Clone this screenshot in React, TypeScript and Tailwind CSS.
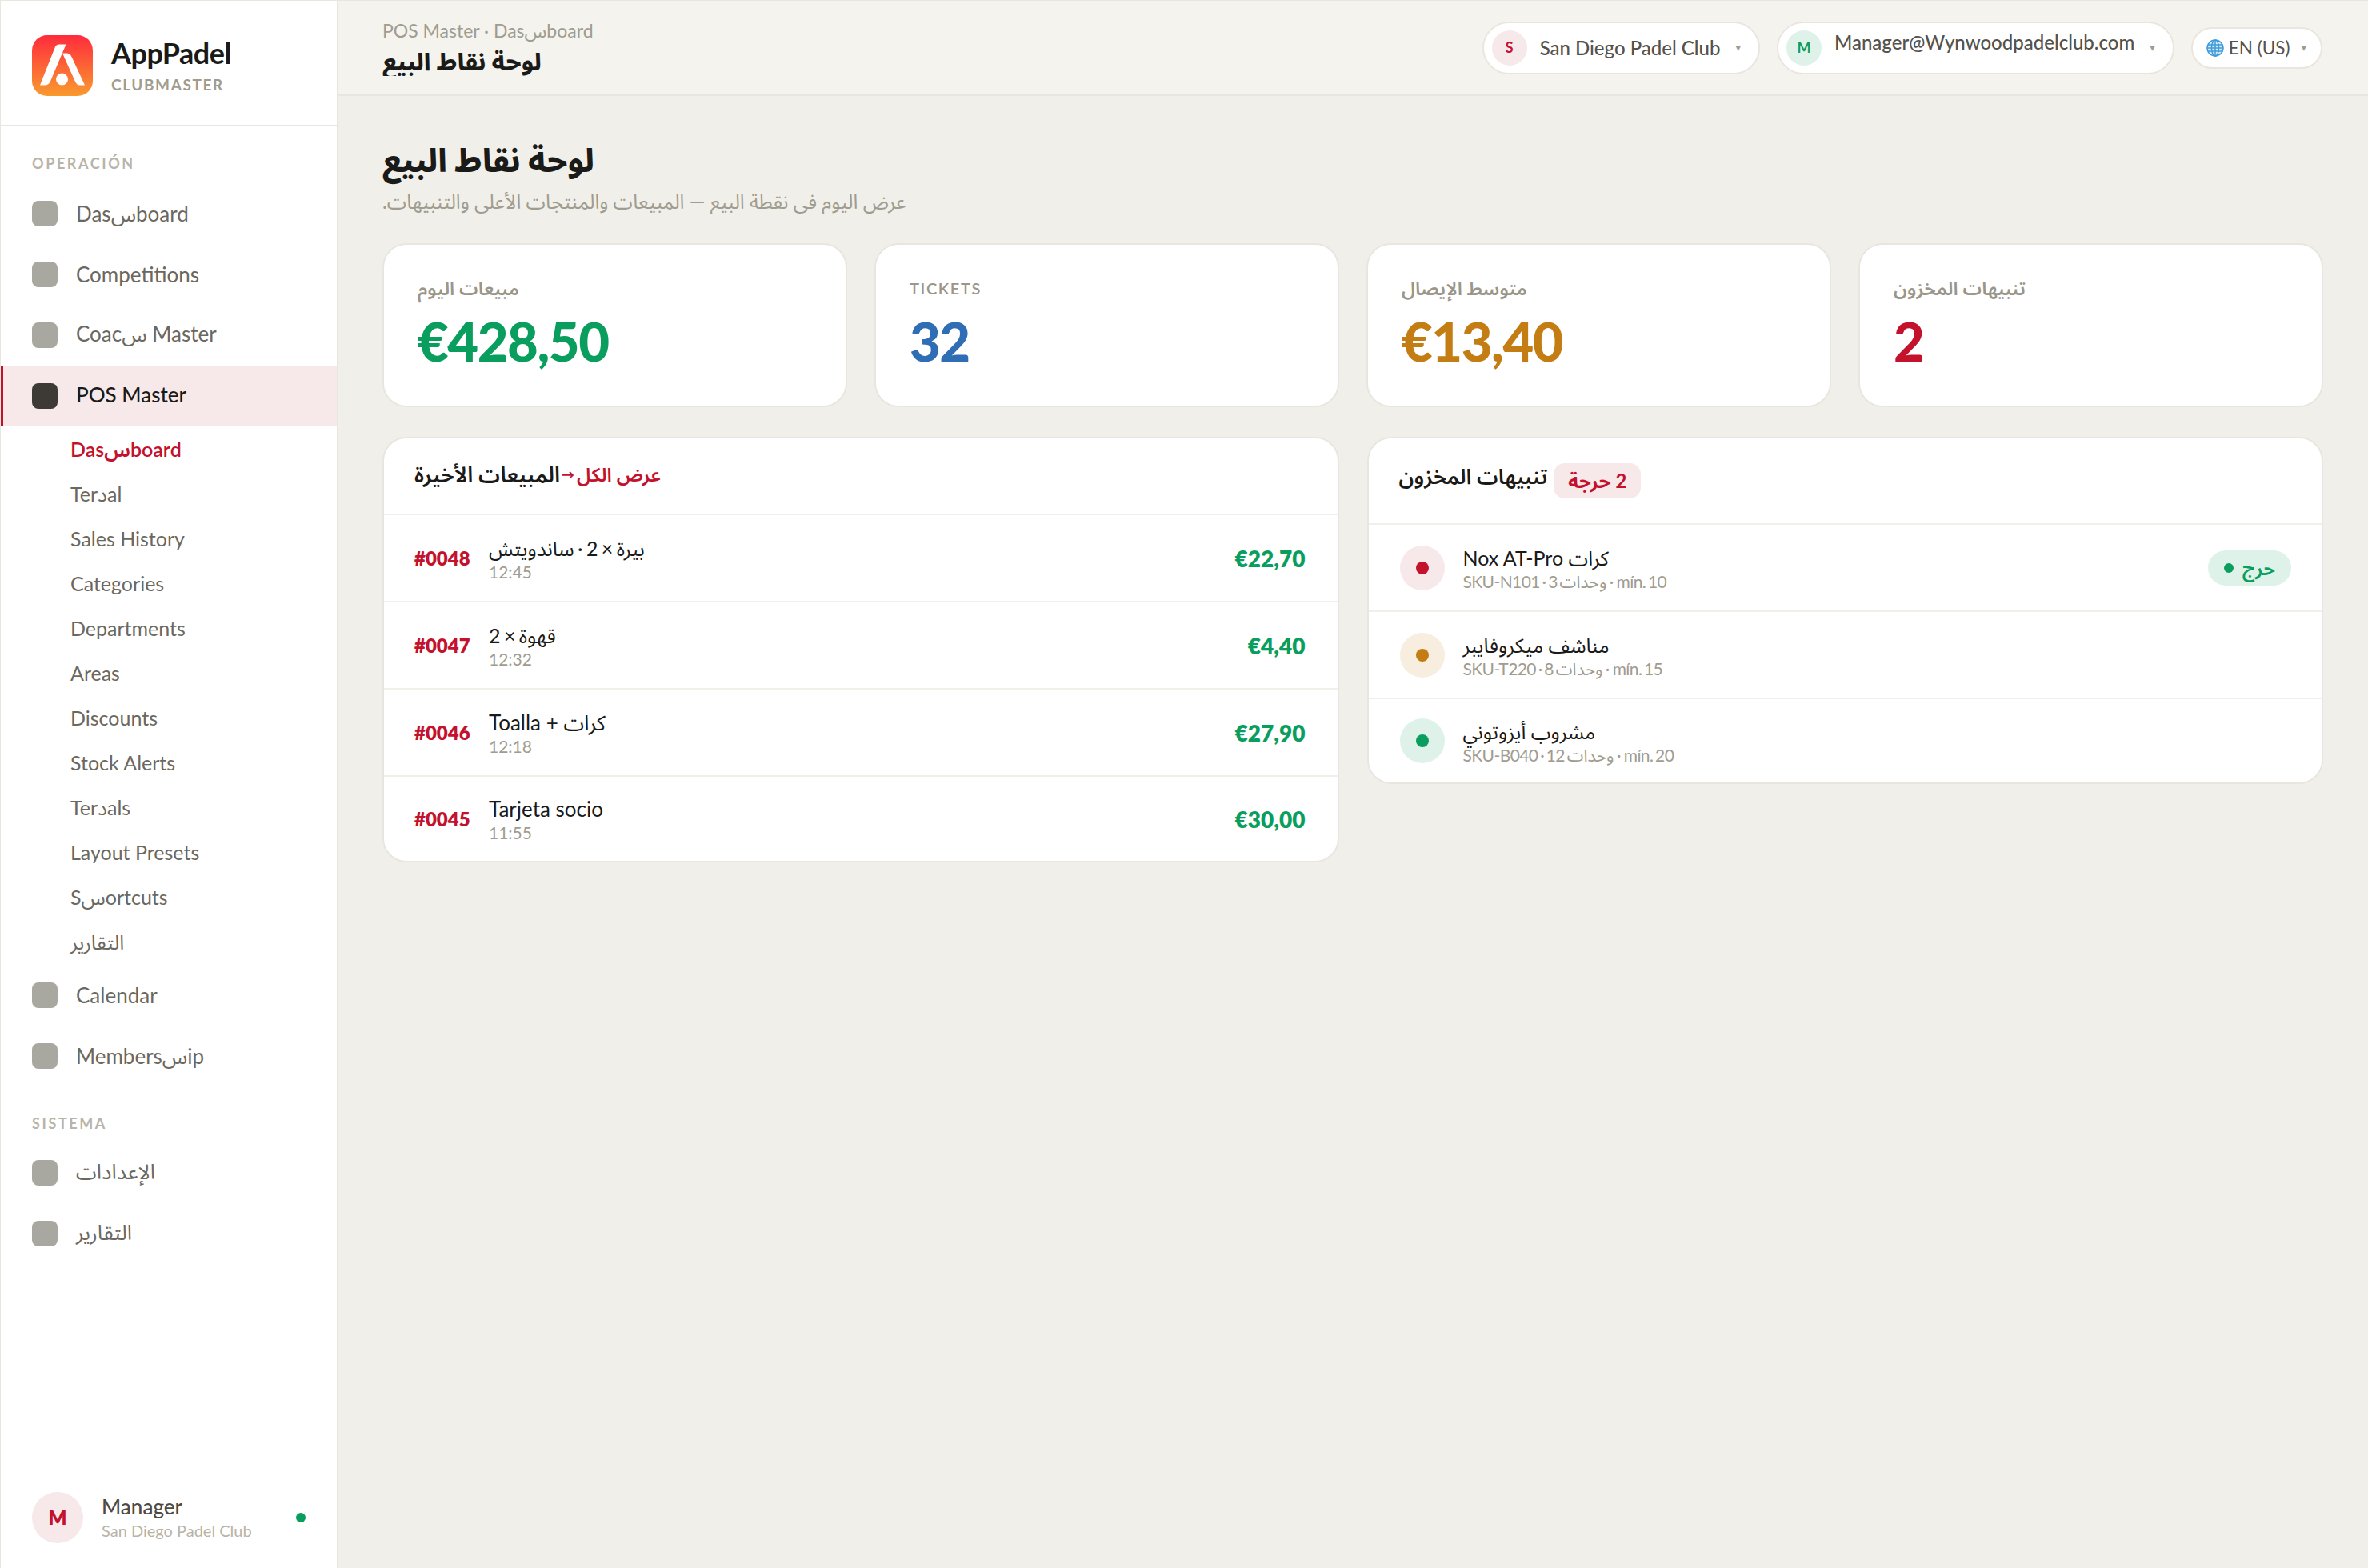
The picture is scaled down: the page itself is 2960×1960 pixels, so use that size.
const font = "font-['Lato','Noto_Sans_Arabic','DejaVu_Sans',sans-serif]"

function Logo() {
  return (
    <svg className="w-[76px] h-[76px] shrink-0" viewBox="0 0 76 76">
      <defs>
        <linearGradient id="logoFill" x1="0" y1="0" x2="0" y2="1">
          <stop offset="0" stopColor="#ff2b3d" />
          <stop offset="1" stopColor="#fa9a2e" />
        </linearGradient>
      </defs>
      <rect width="76" height="76" rx="19" fill="url(#logoFill)" />
      <path d="M29 14.5Q30.5 11.4 34 11.4L42.5 11.4L23 57.5Q21 62.5 16 62.5L10 62.5Z" fill="#fff" />
      <path d="M38 22.5L43 22.5Q47.5 22.5 49.5 27L66 62.5L60 62.5Q56 62.5 54 58Z" fill="#fff" />
      <circle cx="37.5" cy="55" r="7.5" fill="#fff" />
    </svg>
  )
}

function Globe() {
  return (
    <svg className="w-[22px] h-[22px] shrink-0" viewBox="0 0 22 22" fill="none" stroke="#3f9bd8" strokeWidth="1.5">
      <circle cx="11" cy="11" r="10" fill="#d3ebf8" />
      <ellipse cx="11" cy="11" rx="4.5" ry="10" />
      <path d="M11 1V21M1.6 7H20.4M1.6 15H20.4M1 11H21" />
    </svg>
  )
}

function NavItem({ label, active, lift }: { label: string; active?: boolean; lift?: boolean }) {
  return (
    <div className={`h-[76px] flex items-center gap-[23px] ${active ? 'bg-[#f7e8ea] border-l-[3px] border-[#c4122d] pl-[36px] text-[#1a1a18] font-medium' : 'pl-[39px] text-[#6b6860]'}`}>
      <span className={`w-[32px] h-[32px] rounded-[8px] shrink-0 ${active ? 'bg-[#3d3935]' : 'bg-[#a8a7a0]'}`} />
      <span className={`text-[26px] leading-none ${lift ? '-translate-y-[2px]' : ''}`}>{label}</span>
    </div>
  )
}

function SubItem({ label, active }: { label: string; active?: boolean }) {
  return (
    <div className={`h-[56px] flex items-center pl-[87px] text-[25px] ${active ? 'text-[#c4122d] font-semibold' : 'text-[#6b6860]'}`}>
      {label}
    </div>
  )
}

function SectionLabel({ children, className }: { children: string; className: string }) {
  return <div className={`pl-[39px] text-[18px] leading-[24px] font-bold tracking-[2.6px] text-[#b8b4a8] ${className}`}>{children}</div>
}

function Pill({ initial, tone, label, raised }: { initial: string; tone: string; label: string; raised?: boolean }) {
  return (
    <div className="h-[66px] flex items-center bg-white border-2 border-[#e8e6df] rounded-full pl-[10px] pr-[22px]">
      <span className={`w-[44px] h-[44px] rounded-full flex items-center justify-center text-[18px] font-bold ${tone}`}>{initial}</span>
      <span className={`ml-[16px] text-[24px] text-[#55524c] font-medium ${raised ? '-translate-y-[7px]' : ''}`}>{label}</span>
      <span className="ml-[19px] text-[13px] text-[#a09c8f]">▾</span>
    </div>
  )
}

function StatCard({ label, value, color, wide }: { label: string; value: string; color: string; wide?: boolean }) {
  return (
    <div className="h-[205px] bg-white border-2 border-[#e8e6df] rounded-[30px] pl-[42px] pt-[38px]">
      <div className={`h-[32px] leading-[32px] font-semibold text-[#9a968a] ${wide ? 'text-[20px] tracking-[1.6px]' : 'text-[23.5px]'}`}>{label}</div>
      <div className={`mt-[10px] text-[67px] leading-[80px] font-black tracking-[-1.5px] ${color}`}>{value}</div>
    </div>
  )
}

const sales = [
  { id: '#0048', item: 'بيرة × 2 · ساندويتش', time: '12:45', price: '€22,70', tight: true },
  { id: '#0047', item: 'قهوة × 2', time: '12:32', price: '€4,40', tight: true },
  { id: '#0046', item: 'Toalla + كرات', time: '12:18', price: '€27,90' },
  { id: '#0045', item: 'Tarjeta socio', time: '11:55', price: '€30,00' },
]

const alerts = [
  { name: 'Nox AT-Pro كرات', sub: 'SKU-N101 · 3 وحدات · mín. 10', bg: 'bg-[#f7e8ea]', dot: 'bg-[#c4122d]', badge: true },
  { name: 'مناشف ميكروفايبر', sub: 'SKU-T220 · 8 وحدات · mín. 15', bg: 'bg-[#f7eee0]', dot: 'bg-[#c47d12]' },
  { name: 'مشروب أيزوتوني', sub: 'SKU-B040 · 12 وحدات · mín. 20', bg: 'bg-[#dff2e9]', dot: 'bg-[#0a9e5e]' },
]

export default function App() {
  return (
    <div className={`w-[2960px] h-[1960px] flex bg-[#f0efea] border-t border-l border-[#e8e6df] overflow-hidden text-[#1a1a18] ${font}`}>
      {/* Sidebar */}
      <aside className="w-[422px] shrink-0 bg-white border-r-2 border-[#e8e6df] flex flex-col">
        <div className="h-[156px] shrink-0 border-b border-[#e8e6df] flex items-center pl-[39px] pt-[6px] gap-[23px]">
          <Logo />
          <div>
            <div className="text-[36px] leading-[44px] font-bold tracking-[-0.5px] text-[#1a1a18]">AppPadel</div>
            <div className="text-[19px] leading-[26px] mt-[5px] font-bold tracking-[1.6px] text-[#a09c8f]">CLUBMASTER</div>
          </div>
        </div>
        <SectionLabel className="pt-[35px] pb-[13px]">OPERACIÓN</SectionLabel>
        <NavItem label="Dasسboard" />
        <NavItem label="Competitions" />
        <NavItem label="Coacس Master" lift />
        <NavItem label="POS Master" active lift />
        <div className="pt-[1px]">
          <SubItem label="Dasسboard" active />
          <SubItem label="Terدal" />
          <SubItem label="Sales History" />
          <SubItem label="Categories" />
          <SubItem label="Departments" />
          <SubItem label="Areas" />
          <SubItem label="Discounts" />
          <SubItem label="Stock Alerts" />
          <SubItem label="Terدals" />
          <SubItem label="Layout Presets" />
          <SubItem label="Sسortcuts" />
          <SubItem label="التقارير" />
        </div>
        <NavItem label="Calendar" />
        <NavItem label="Membersسip" />
        <SectionLabel className="pt-[34px] pb-[12px]">SISTEMA</SectionLabel>
        <NavItem label="الإعدادات" lift />
        <NavItem label="التقارير" lift />
        <div className="mt-auto h-[128px] border-t border-[#e8e6df] flex items-center pl-[39px]">
          <span className="w-[64px] h-[64px] rounded-full bg-[#f7e8ea] text-[#c4122d] text-[24px] font-extrabold flex items-center justify-center">M</span>
          <div className="ml-[23px]">
            <div className="text-[26px] leading-[32px] font-medium text-[#4d4a45]">Manager</div>
            <div className="text-[20px] leading-[28px] text-[#b8b4a8]">San Diego Padel Club</div>
          </div>
          <span className="ml-auto mr-[39px] w-[12px] h-[12px] rounded-full bg-[#0a9e5e]" />
        </div>
      </aside>

      <main className="flex-1 flex flex-col min-w-0">
        {/* Topbar */}
        <header className="h-[119px] shrink-0 bg-[#f4f3ee] border-b-2 border-[#e8e6df] flex items-center justify-between pl-[55px] pr-[57px]">
          <div className="self-start pt-[22px]">
            <div className="text-[23px] leading-[30px] text-[#a09c8f]">POS Master · Dasسboard</div>
            <div className="h-[40px] mt-[2px] overflow-hidden text-[30px] leading-[42px] font-extrabold text-[#1a1a18]">لوحة نقاط البيع</div>
          </div>
          <div className="flex items-center gap-[21px]">
            <Pill initial="S" tone="bg-[#f7e8ea] text-[#c4122d]" label="San Diego Padel Club" />
            <Pill initial="M" tone="bg-[#dff2e9] text-[#0a9e5e]" label="Manager@Wynwoodpadelclub.com" raised />
            <div className="h-[52px] flex items-center bg-white border-2 border-[#e8e6df] rounded-full pl-[17px] pr-[18px] gap-[6px]">
              <Globe />
              <span className="text-[22.5px] text-[#55524c]">EN (US)</span>
              <span className="ml-[8px] text-[13px] text-[#a09c8f]">▾</span>
            </div>
          </div>
        </header>

        {/* Content */}
        <div className="flex-1 pl-[55px] pr-[56px] pt-[50px]">
          <h1 className="text-[40px] leading-[60px] font-extrabold text-[#1a1a18]">لوحة نقاط البيع</h1>
          <p dir="rtl" className="mt-[4px] w-fit h-[34px] overflow-hidden text-[24.7px] leading-[36px] text-[#a09c8f]">عرض اليوم فى نقطة البيع — المبيعات والمنتجات الأعلى والتنبيهات.</p>

          <div className="mt-[36px] grid grid-cols-4 gap-[34px]">
            <StatCard label="مبيعات اليوم" value="€428,50" color="text-[#0a9e5e]" />
            <StatCard label="TICKETS" value="32" color="text-[#2f6db5]" wide />
            <StatCard label="متوسط الإيصال" value="€13,40" color="text-[#c47d12]" />
            <StatCard label="تنبيهات المخزون" value="2" color="text-[#c4122d]" />
          </div>

          <div className="mt-[37px] grid grid-cols-2 gap-[35px] items-start">
            {/* Recent sales */}
            <section className="bg-white border-2 border-[#e8e6df] rounded-[30px] overflow-hidden">
              <div className="h-[94px] flex items-center pl-[38px] pb-[4px]">
                <span className="text-[27px] font-semibold text-[#1a1a18]">المبيعات الأخيرة</span>
                <span className="ml-[2px] text-[16px] font-black text-[#c4122d]">→</span>
                <span className="ml-[3px] text-[24px] font-semibold text-[#c4122d]">عرض الكل</span>
              </div>
              {sales.map((s) => (
                <div key={s.id} className="h-[109px] last:h-[107px] border-t-2 border-[#f0efea] flex items-center pl-[38px] pr-[40px]">
                  <span className="w-[93px] text-[24px] font-extrabold text-[#c4122d]">{s.id}</span>
                  <div>
                    <div className={`leading-[34px] text-[#1a1a18] ${s.tight ? 'text-[25px] [word-spacing:-2px]' : 'text-[26px]'}`}>{s.item}</div>
                    <div className="text-[21px] leading-[26px] text-[#a09c8f]">{s.time}</div>
                  </div>
                  <span className="ml-auto text-[28px] font-extrabold text-[#0a9e5e]">{s.price}</span>
                </div>
              ))}
            </section>

            {/* Stock alerts */}
            <section className="bg-white border-2 border-[#e8e6df] rounded-[30px] overflow-hidden">
              <div className="h-[106px] flex items-center pl-[38px] gap-[8px]">
                <span className="text-[26.5px] font-semibold text-[#1a1a18] -translate-y-[5px]">تنبيهات المخزون</span>
                <span dir="rtl" className="h-[44px] flex items-center px-[18px] rounded-[14px] bg-[#f7e8ea] text-[24px] font-bold text-[#c4122d]">2 حرجة</span>
              </div>
              {alerts.map((a) => (
                <div key={a.sub} className="h-[109px] last:h-[106px] border-t-2 border-[#f0efea] flex items-center pl-[39px] pr-[38px]">
                  <span className={`w-[56px] h-[56px] rounded-full flex items-center justify-center shrink-0 ${a.bg}`}>
                    <span className={`w-[16px] h-[16px] rounded-full ${a.dot}`} />
                  </span>
                  <div className="ml-[23px]">
                    <div className="text-[25px] leading-[34px] text-[#1a1a18]">{a.name}</div>
                    <div className="text-[21px] leading-[25px] tracking-[-0.6px] [word-spacing:-2px] text-[#a09c8f]">{a.sub}</div>
                  </div>
                  {a.badge && (
                    <span className="ml-auto h-[44px] w-[104px] rounded-full bg-[#dff2e9] flex items-center justify-center gap-[11px] text-[24px] font-semibold text-[#0a9e5e]">
                      <span className="w-[12px] h-[12px] rounded-full bg-[#0a9e5e]" />
                      حرج
                    </span>
                  )}
                </div>
              ))}
            </section>
          </div>
        </div>
      </main>
    </div>
  )
}
